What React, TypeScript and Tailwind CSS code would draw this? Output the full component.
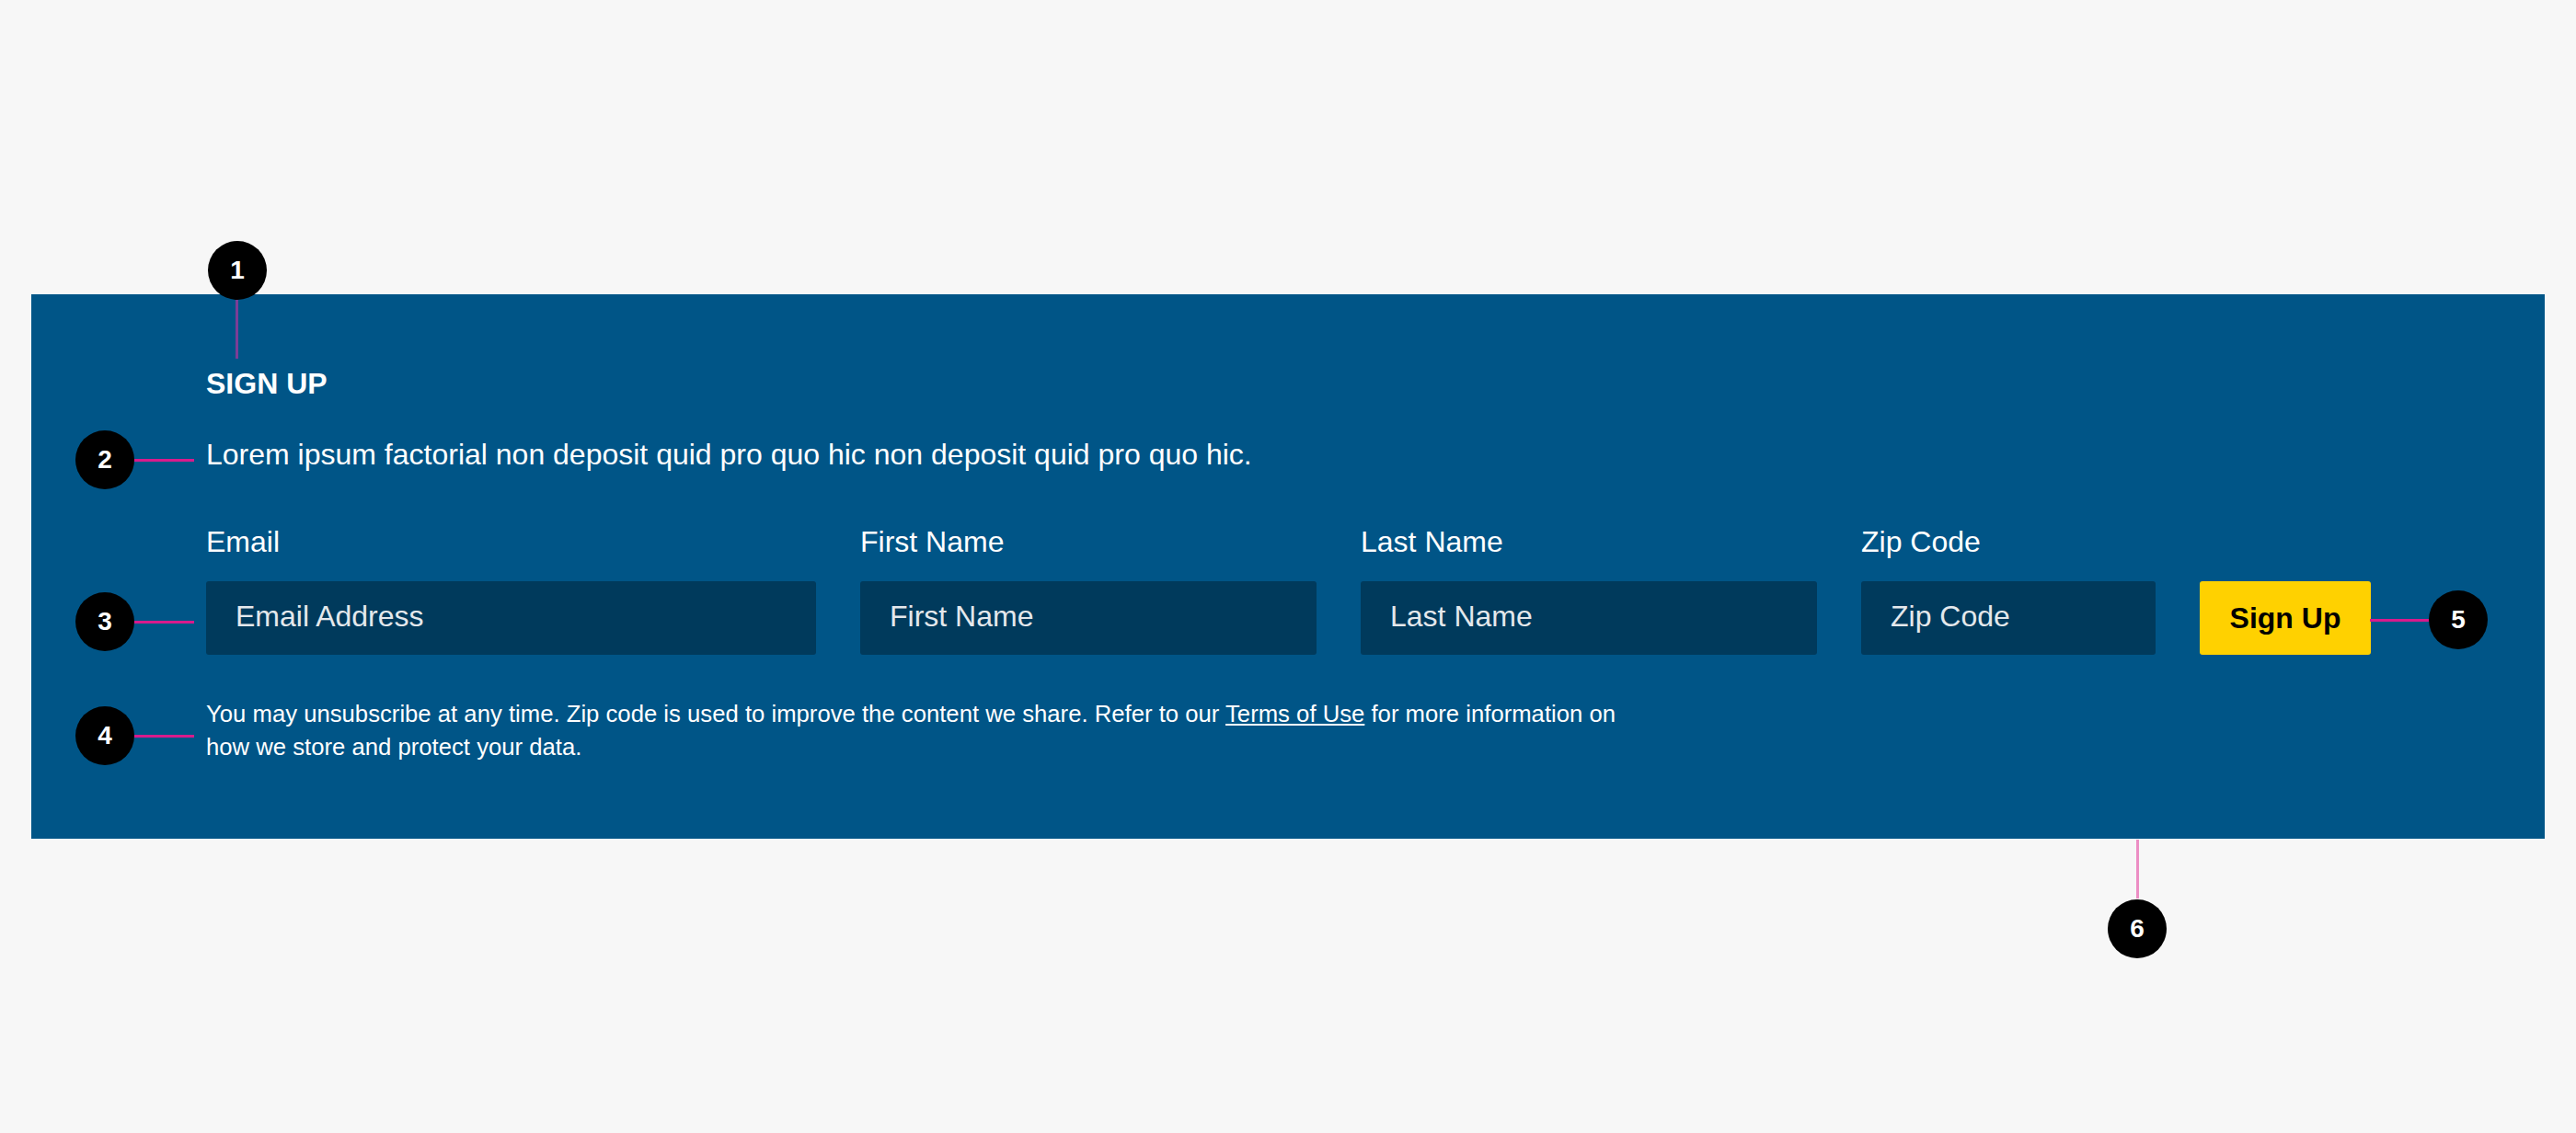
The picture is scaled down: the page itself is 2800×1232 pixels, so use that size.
import type { ReactNode } from 'react'

const font = { fontFamily: '"Liberation Sans", Arial, Helvetica, sans-serif' }

function Marker({ n, className }: { n: number; className: string }) {
  return (
    <div
      className={`absolute flex h-16 w-16 items-center justify-center rounded-full bg-black text-[28px] font-bold text-white ${className}`}
    >
      {n}
    </div>
  )
}

function Line({ className }: { className: string }) {
  return <div className={`absolute ${className}`} />
}

function Field({ label, placeholder, children }: { label: string; placeholder?: string; children?: ReactNode }) {
  return (
    <div className="flex flex-col gap-[23px]">
      <label className="h-10 text-[32px] leading-10 text-white">{label}</label>
      {children ?? (
        <input
          placeholder={placeholder}
          className="h-20 w-full rounded-[3px] bg-[#003a5c] px-8 pb-1 text-[32px] text-white outline-none placeholder:text-[#e4e8ec]"
          style={font}
        />
      )}
    </div>
  )
}

export default function App() {
  return (
    <div className="relative min-h-[1232px] w-full bg-[#f7f7f7] px-[34px] pt-[320px]" style={font}>
      <section className="flex flex-col bg-[#005587] px-[190px] pt-[77px] pb-[82px]">
        <h2 className="text-[32px] font-bold leading-10 text-white">SIGN UP</h2>
        <p className="mt-[37px] text-[32px] leading-10 text-white">
          Lorem ipsum factorial non deposit quid pro quo hic non deposit quid pro quo hic.
        </p>

        <div className="mt-[55px] grid grid-cols-[663px_496px_496px_320px_186px] gap-x-12">
          <Field label="Email" placeholder="Email Address" />
          <Field label="First Name" placeholder="First Name" />
          <Field label="Last Name" placeholder="Last Name" />
          <Field label="Zip Code" placeholder="Zip Code" />
          <div className="flex flex-col justify-end">
            <button className="h-20 w-full rounded-[3px] bg-[#ffd100] text-[32px] font-bold text-black">
              Sign Up
            </button>
          </div>
        </div>

        <p className="mt-[46px] max-w-[1550px] text-[25.7px] leading-9 text-white">
          You may unsubscribe at any time. Zip code is used to improve the content we share. Refer to our{' '}
          <a href="#" className="underline underline-offset-2">Terms of Use</a> for more information on how we
          store and protect your data.
        </p>
      </section>

      {/* annotation markers */}
      <Line className="left-[256px] top-[326px] h-16 w-[3px] bg-[#7b3d96]" />
      <Marker n={1} className="left-[226px] top-[262px]" />

      <Line className="left-[146px] top-[499px] h-[3px] w-[65px] bg-[#d81b8c]" />
      <Marker n={2} className="left-[82px] top-[468px]" />

      <Line className="left-[146px] top-[675px] h-[3px] w-[65px] bg-[#d81b8c]" />
      <Marker n={3} className="left-[82px] top-[644px]" />

      <Line className="left-[146px] top-[799px] h-[3px] w-[65px] bg-[#d81b8c]" />
      <Marker n={4} className="left-[82px] top-[768px]" />

      <Line className="left-[2576px] top-[673px] h-[3px] w-16 bg-[#d81b8c]" />
      <Marker n={5} className="left-[2640px] top-[642px]" />

      <Line className="left-[2322px] top-[913px] h-16 w-[3px] bg-[#ec8ec4]" />
      <Marker n={6} className="left-[2291px] top-[978px]" />
    </div>
  )
}
